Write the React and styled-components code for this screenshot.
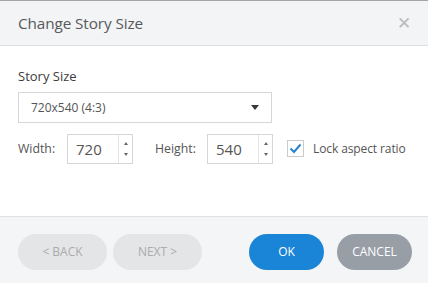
import React from "react";
import styled, { createGlobalStyle } from "styled-components";

const Global = createGlobalStyle`
  html, body { margin: 0; padding: 0; background: #fff; }
  body { font-family: "Open Sans", "Noto Sans", sans-serif; }
  * { box-sizing: border-box; }
`;

const Dialog = styled.div`
  width: 428px;
  height: 283px;
  display: flex;
  flex-direction: column;
  border-top: 1px solid #a6a6a6;
  background: #fff;
`;

const Header = styled.div`
  height: 45px;
  flex: none;
  display: flex;
  align-items: center;
  justify-content: space-between;
  padding: 0 17px 0 18px;
  background: #f2f4f5;
  border-bottom: 1px solid #dcdfe1;
`;

const Title = styled.div`
  font-size: 15.3px;
  color: #58595b;
  letter-spacing: -0.1px;
`;

const Close = styled.div`
  font-size: 17px;
  line-height: 1;
  color: #b9bbbd;
  margin-top: -2px;
`;

const Body = styled.div`
  flex: 1;
  padding: 21px 18px 0 18px;
  display: flex;
  flex-direction: column;
`;

const Label = styled.div`
  font-size: 13px;
  color: #3c3c3c;
  line-height: 18px;
`;

const Select = styled.div`
  margin-top: 7px;
  width: 254px;
  height: 31px;
  border: 1px solid #d5d7d9;
  display: flex;
  align-items: center;
  justify-content: space-between;
  padding: 0 12px 0 12px;
  font-size: 12px;
  color: #555;
`;

const Caret = styled.div`
  width: 0;
  height: 0;
  border-left: 4px solid transparent;
  border-right: 4px solid transparent;
  border-top: 5px solid #3a3a3a;
`;

const Row = styled.div`
  margin-top: 10px;
  display: flex;
  align-items: center;
  height: 31px;
`;

const FieldLabel = styled.div`
  flex: none;
  font-size: 12.3px;
  color: #555;
  width: ${(p) => p.w}px;
`;

const Spin = styled.div`
  flex: none;
  width: 66px;
  height: 30px;
  border: 1px solid #d5d7d9;
  display: flex;
  margin-right: ${(p) => p.mr || 0}px;
`;

const SpinValue = styled.div`
  flex: 1;
  font-size: 15px;
  color: #555;
  padding-left: 8px;
  display: flex;
  align-items: center;
`;

const SpinButtons = styled.div`
  width: 14px;
  border-left: 1px solid #e2e4e6;
  display: flex;
  flex-direction: column;
  align-items: center;
  justify-content: space-around;
  padding: 3px 0;
`;

const Arrow = styled.div`
  width: 0;
  height: 0;
  border-left: 2.5px solid transparent;
  border-right: 2.5px solid transparent;
  ${(p) => (p.up ? "border-bottom: 3px solid #666;" : "border-top: 3px solid #666;")}
`;

const CheckBox = styled.div`
  flex: none;
  width: 17px;
  height: 17px;
  border: 1px solid #c9ccce;
  display: flex;
  align-items: center;
  justify-content: center;
  margin-right: 9px;
`;

const CheckLabel = styled.div`
  flex: none;
  white-space: nowrap;
  font-size: 12px;
  letter-spacing: -0.1px;
  color: #555;
`;

const Footer = styled.div`
  height: 67px;
  flex: none;
  background: #f4f5f6;
  border-top: 1px solid #dfe1e3;
  display: flex;
  align-items: center;
  padding: 0 16px 0 18px;
  gap: 6px;
`;

const Button = styled.div`
  flex: none;
  width: ${(p) => p.w}px;
  height: 36px;
  border-radius: 18px;
  display: flex;
  align-items: center;
  justify-content: center;
  font-size: 12px;
  background: ${(p) => p.bg};
  color: ${(p) => p.fg};
  margin-left: ${(p) => p.ml || 0}px;
  margin-top: 3px;
`;

export default function App() {
  return (
    <>
      <Global />
      <Dialog>
        <Header>
          <Title>Change Story Size</Title>
          <Close>✕</Close>
        </Header>
        <Body>
          <Label>Story Size</Label>
          <Select>
            <span>720x540 (4:3)</span>
            <Caret />
          </Select>
          <Row>
            <FieldLabel w={49}>Width:</FieldLabel>
            <Spin mr={22}>
              <SpinValue>720</SpinValue>
              <SpinButtons>
                <Arrow up />
                <Arrow />
              </SpinButtons>
            </Spin>
            <FieldLabel w={52}>Height:</FieldLabel>
            <Spin mr={14}>
              <SpinValue>540</SpinValue>
              <SpinButtons>
                <Arrow up />
                <Arrow />
              </SpinButtons>
            </Spin>
            <CheckBox>
              <svg width="13" height="11" viewBox="0 0 13 11">
                <path d="M1.5 5.5 L5 9 L11.5 1.5" fill="none" stroke="#2583d1" strokeWidth="2" />
              </svg>
            </CheckBox>
            <CheckLabel>Lock aspect ratio</CheckLabel>
          </Row>
        </Body>
        <Footer>
          <Button w={89} bg="#e4e5e6" fg="#ababab">&lt; BACK</Button>
          <Button w={89} bg="#e4e5e6" fg="#ababab">NEXT &gt;</Button>
          <Button w={75} ml={41} bg="#1a85d6" fg="#fff">OK</Button>
          <Button w={75} ml={7} bg="#979ea6" fg="#fff">CANCEL</Button>
        </Footer>
      </Dialog>
    </>
  );
}
